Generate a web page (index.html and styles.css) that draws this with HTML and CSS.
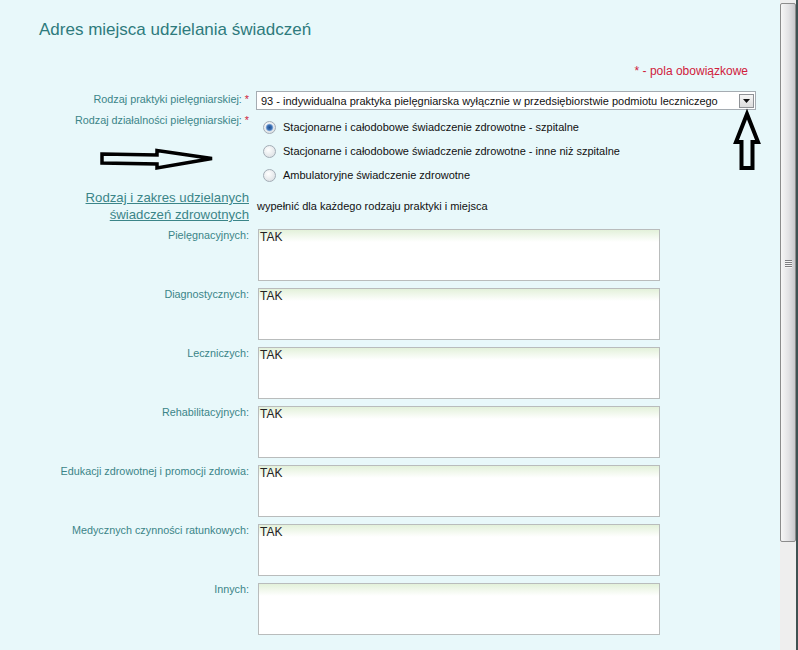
FILE: index.html
```html
<!DOCTYPE html>
<html lang="pl">
<head>
    <meta charset="UTF-8">
    <meta name="viewport" content="width=device-width, initial-scale=1.0">
    <title>Adres miejsca udzielania świadczeń</title>
    <link rel="stylesheet" href="styles.css">
</head>
<body>
    <div class="okno">
        <main class="tresc">
            <h1 class="tytul">Adres miejsca udzielania świadczeń</h1>
            <p class="wymagane">* - pola obowiązkowe</p>

            <div class="formularz">
                <div class="wiersz wiersz-lista">
                    <label class="etykieta">Rodzaj praktyki pielęgniarskiej: <span class="gwiazdka">*</span></label>
                    <div class="lista">
                        <span class="lista-tekst">93 - indywidualna praktyka pielęgniarska wyłącznie w przedsiębiorstwie podmiotu leczniczego</span>
                        <span class="lista-przycisk">
                            <svg width="7" height="4" viewBox="0 0 7 4"><path d="M0 0h7L3.5 4z" fill="#111"/></svg>
                        </span>
                    </div>
                </div>

                <div class="wiersz wiersz-radio">
                    <label class="etykieta">Rodzaj działalności pielęgniarskiej: <span class="gwiazdka">*</span></label>
                    <div class="opcje">
                        <label class="opcja"><input type="radio" name="dzialalnosc" checked> Stacjonarne i całodobowe świadczenie zdrowotne - szpitalne</label>
                        <label class="opcja"><input type="radio" name="dzialalnosc"> Stacjonarne i całodobowe świadczenie zdrowotne - inne niż szpitalne</label>
                        <label class="opcja"><input type="radio" name="dzialalnosc"> Ambulatoryjne świadczenie zdrowotne</label>
                    </div>
                </div>

                <div class="wiersz wiersz-naglowek">
                    <div class="naglowek"><a href="#">Rodzaj i zakres udzielanych</a><br><a href="#">świadczeń zdrowotnych</a></div>
                    <div class="wskazowka">wypełnić dla każdego rodzaju praktyki i miejsca</div>
                </div>

                <div class="wiersz wiersz-pole">
                    <label class="etykieta">Pielęgnacyjnych:</label>
                    <textarea class="pole">TAK</textarea>
                </div>
                <div class="wiersz wiersz-pole">
                    <label class="etykieta">Diagnostycznych:</label>
                    <textarea class="pole">TAK</textarea>
                </div>
                <div class="wiersz wiersz-pole">
                    <label class="etykieta">Leczniczych:</label>
                    <textarea class="pole">TAK</textarea>
                </div>
                <div class="wiersz wiersz-pole">
                    <label class="etykieta">Rehabilitacyjnych:</label>
                    <textarea class="pole">TAK</textarea>
                </div>
                <div class="wiersz wiersz-pole">
                    <label class="etykieta">Edukacji zdrowotnej i promocji zdrowia:</label>
                    <textarea class="pole">TAK</textarea>
                </div>
                <div class="wiersz wiersz-pole">
                    <label class="etykieta">Medycznych czynności ratunkowych:</label>
                    <textarea class="pole">TAK</textarea>
                </div>
                <div class="wiersz wiersz-pole">
                    <label class="etykieta">Innych:</label>
                    <textarea class="pole"></textarea>
                </div>
            </div>

            <!-- strzałki dorysowane na zrzucie -->
            <svg class="strzalki" width="780" height="650" viewBox="0 0 780 650">
                <path d="M102 154L157 155L157 150.5L212 158.5L157 168L157 164L102 163Z" fill="none" stroke="#000" stroke-width="3.5" stroke-linejoin="miter"/>
                <path d="M747 114L758 142L752.5 142L752.5 168L741.5 168L741.5 142L736 142Z" fill="none" stroke="#000" stroke-width="4" stroke-linejoin="miter"/>
            </svg>
        </main>

        <div class="pasek">
            <div class="suwak"><span class="uchwyt"></span></div>
        </div>
    </div>
</body>
</html>
```

FILE: styles.css
```css
/* Ogólne */
body {
    margin: 0;
    overflow: hidden;
    background-color: #e8f8fa;
    font-family: "Liberation Sans", Arial, sans-serif;
}

.okno {
    display: flex;
    height: 650px;
}

.tresc {
    position: relative;
    width: 780px;
    flex: none;
}

/* Tytuł i informacja o polach */
.tytul {
    margin: 19px 0 0 39px;
    font-size: 17px;
    line-height: 22px;
    font-weight: normal;
    color: #2e7b7d;
}

.wymagane {
    margin: 22px 32px 0 0;
    text-align: right;
    font-size: 12px;
    line-height: 16px;
    color: #d0203a;
}

/* Formularz */
.formularz {
    display: flex;
    flex-direction: column;
    margin-top: 12px;
}

.wiersz {
    display: flex;
    align-items: flex-start;
}

.etykieta {
    width: 249px;
    margin-right: 7px;
    flex: none;
    text-align: right;
    font-size: 10.8px;
    color: #3b8588;
}

.gwiazdka {
    color: #d0203a;
}

/* Lista rozwijana */
.wiersz-lista .etykieta {
    line-height: 17px;
}

.lista {
    display: flex;
    align-items: center;
    justify-content: space-between;
    box-sizing: border-box;
    width: 500px;
    height: 19px;
    padding: 0 1px 0 4px;
    background: #fff;
    border: 1px solid #a5acb2;
    font-size: 11px;
    color: #111;
}

.lista-przycisk {
    display: flex;
    align-items: center;
    justify-content: center;
    box-sizing: border-box;
    width: 15px;
    height: 14px;
    border: 1px solid #8f9296;
    background: linear-gradient(#f6f6f6, #dcdcdc);
}

/* Przyciski radiowe */
.wiersz-radio {
    margin-top: 4px;
}

.wiersz-radio .etykieta {
    line-height: 12px;
}

.opcje {
    display: flex;
    flex-direction: column;
    padding-top: 1px;
}

.opcja {
    display: flex;
    align-items: center;
    height: 24px;
    font-size: 11px;
    color: #111;
}

.opcja input {
    appearance: none;
    width: 13px;
    height: 13px;
    margin: 0 7px 0 7px;
    border: 1px solid #a3adb6;
    border-radius: 50%;
    background: radial-gradient(circle at 40% 35%, #ffffff, #d5dade);
}

.opcja input:checked {
    background: radial-gradient(circle, #1f4f8f 0, #3f74b8 2.5px, #9bbbe0 3.5px, transparent 4.2px),
                radial-gradient(circle at 40% 35%, #ffffff, #d5dade);
}

/* Nagłówek sekcji */
.wiersz-naglowek {
    margin-top: 2px;
}

.naglowek {
    width: 249px;
    margin-right: 7px;
    flex: none;
    text-align: right;
    font-size: 13.2px;
    line-height: 17px;
}

.naglowek a {
    color: #3b8588;
    text-decoration: underline;
}

.wskazowka {
    align-self: center;
    margin-left: 1px;
    font-size: 11px;
    color: #111;
}

/* Pola tekstowe */
.wiersz-pole {
    margin-top: 7px;
}

.wiersz-naglowek + .wiersz-pole {
    margin-top: 6px;
}

.wiersz-pole .etykieta {
    line-height: 12px;
}

.pole {
    box-sizing: border-box;
    width: 402px;
    height: 52px;
    margin: 0 0 0 2px;
    padding: 0 1px;
    border: 1px solid #b9bcbc;
    background: linear-gradient(#e3f1da, #ffffff 12px);
    font-family: "Liberation Sans", Arial, sans-serif;
    font-size: 12px;
    line-height: 14px;
    color: #222;
    resize: none;
    overflow: hidden;
}

/* Strzałki */
.strzalki {
    position: absolute;
    top: 0;
    left: 0;
    pointer-events: none;
}

/* Pasek przewijania */
.pasek {
    width: 16px;
    flex: none;
    background: #eeeeee;
    border-right: 2px solid #3f5253;
}

.suwak {
    display: flex;
    align-items: center;
    justify-content: center;
    box-sizing: border-box;
    height: 539px;
    margin-top: 3px;
    padding-bottom: 18px;
    border: 1px solid #8c8c8c;
    border-radius: 2px;
    background: linear-gradient(to right, #f6f6f6, #e2e2e4 55%, #c9c9cd);
}

.uchwyt {
    width: 7px;
    height: 8px;
    background: repeating-linear-gradient(#7d7d80 0 1px, #f4f4f4 1px 2px);
}
```
